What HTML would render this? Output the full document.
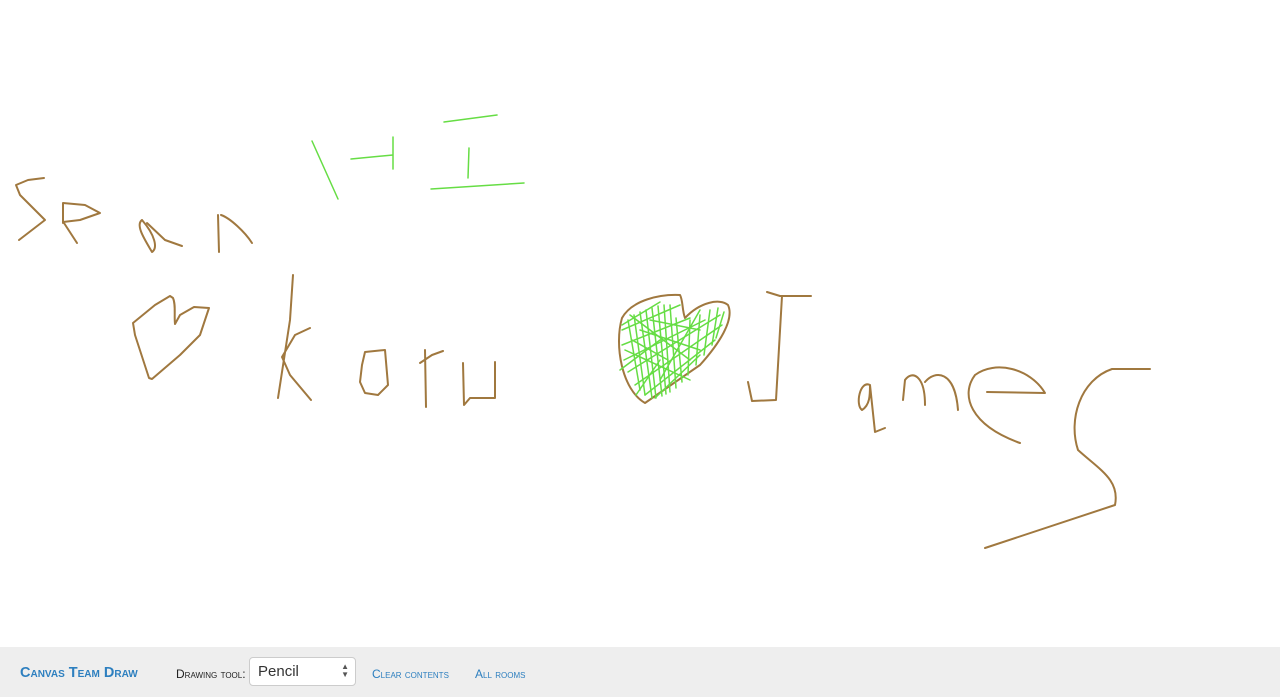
<!DOCTYPE html>
<html><head><meta charset="utf-8"><style>
html,body{margin:0;padding:0;width:1280px;height:697px;overflow:hidden;background:#fff;font-family:"Liberation Sans",sans-serif}
svg{position:absolute;left:0;top:0}
.bar{position:absolute;left:0;top:647px;width:1280px;height:50px;background:#eeeeee}
.t{position:absolute;font-variant:small-caps;font-family:"Comic Sans MS","Liberation Sans",sans-serif;}
.sel{position:absolute;left:249px;top:657px;width:107px;height:29px;background:#fff;border:1px solid #ccc;border-radius:4px;box-sizing:border-box;font-size:15px;color:#333;padding:5px 0 0 8px}
</style></head><body>
<svg width="1280" height="647" viewBox="0 0 1280 647" fill="none" stroke-linecap="round" stroke-linejoin="round">
<g stroke="#a0783f" stroke-width="2">
<path d="M44,178 L28,180 L16,185 L20,195 L45,220 L19,240"/>
<path d="M63,223 L63,203 L85,205 L100,213 L80,220 L63,222 M64,223 L77,243"/>
<path d="M142,220 C135,225 145,240 152,252 C158,248 155,235 142,220 M147,223 L165,240 L182,246"/>
<path d="M218,215 L219,252 M221,215 C230,218 245,232 252,243"/>
<path d="M173,298 L170,296 L155,305 L133,323 L135,335 L149,378 L152,379 L180,355 L200,335 L209,308 L194,307 L180,315 L175,324 C174,315 176,305 173,298"/>
<path d="M293,275 L290,320 L278,398 M310,328 L295,335 L282,357 L290,375 L311,400"/>
<path d="M365,352 L385,350 L388,385 L378,395 L365,393 L360,382 L362,365 Z"/>
<path d="M425,350 L426,407 M420,363 L432,355 L443,351"/>
<path d="M463,363 L464,405 L470,398 L495,398 L495,362"/>
<path d="M680,295 C660,294 632,300 622,318 C614,345 622,390 645,403 L700,365 C718,345 735,320 728,305 C720,298 700,302 685,318 C682,310 683,300 680,295 Z"/>
<path d="M767,292 L780,296 L811,296 M782,296 L776,400 L752,401 L748,382"/>
<path d="M870,385 C860,380 855,405 862,410 C870,405 870,395 870,385 L875,432 L885,428"/>
<path d="M903,400 L905,380 C912,370 925,375 925,405 M925,382 C935,370 955,370 958,410"/>
<path d="M987,392 L1045,393 C1030,368 995,360 975,375 C960,395 970,425 1020,443"/>
<path d="M1150,369 L1112,369 C1080,380 1068,420 1078,450 C1100,470 1120,480 1115,505 L985,548"/>
</g>
<g stroke="#66dd44" stroke-width="1.5">
<path d="M312,141 L338,199 M351,159 L393,155 M393,137 L393,169"/>
<path d="M444,122 L497,115 M469,148 L468,178 M431,189 L524,183"/>
<path d="M628,320 L640,390 M634,315 L645,395 M640,312 L652,398 M646,310 L656,398 M652,308 L662,396 M658,306 L666,394 M664,305 L670,392 M670,305 L676,388 M676,318 L682,382 M690,320 L688,375 M700,315 L696,365 M710,310 L704,355 M718,308 L712,345 M724,312 L716,338"/>
<path d="M622,330 L680,305 M622,345 L690,318 M624,360 L705,320 M628,372 L720,315 M635,385 L722,325 M645,395 L715,340 M655,398 L700,355 M622,325 L660,302 M640,330 L700,350 M625,350 L690,380 M630,315 L690,360"/>
<path d="M632,340 L668,360 M650,320 L700,330 M620,370 L660,340 M660,380 L700,310 M636,395 L660,360"/>
</g>
</svg>
<div class="bar"></div>
<div class="t" style="left:20px;top:665px;font-size:14.5px;color:#2d7fbf;font-weight:bold">Canvas Team Draw</div>
<div class="t" style="left:176px;top:667px;font-size:12px;color:#222">Drawing tool:</div>
<div class="sel">Pencil<span style="position:absolute;right:6px;top:5px;font-size:8px;line-height:8px;color:#555">▲<br>▼</span></div>
<div class="t" style="left:372px;top:667px;font-size:12px;color:#2d7fbf">Clear contents</div>
<div class="t" style="left:475px;top:667px;font-size:12px;color:#2d7fbf">All rooms</div>
</body></html>
